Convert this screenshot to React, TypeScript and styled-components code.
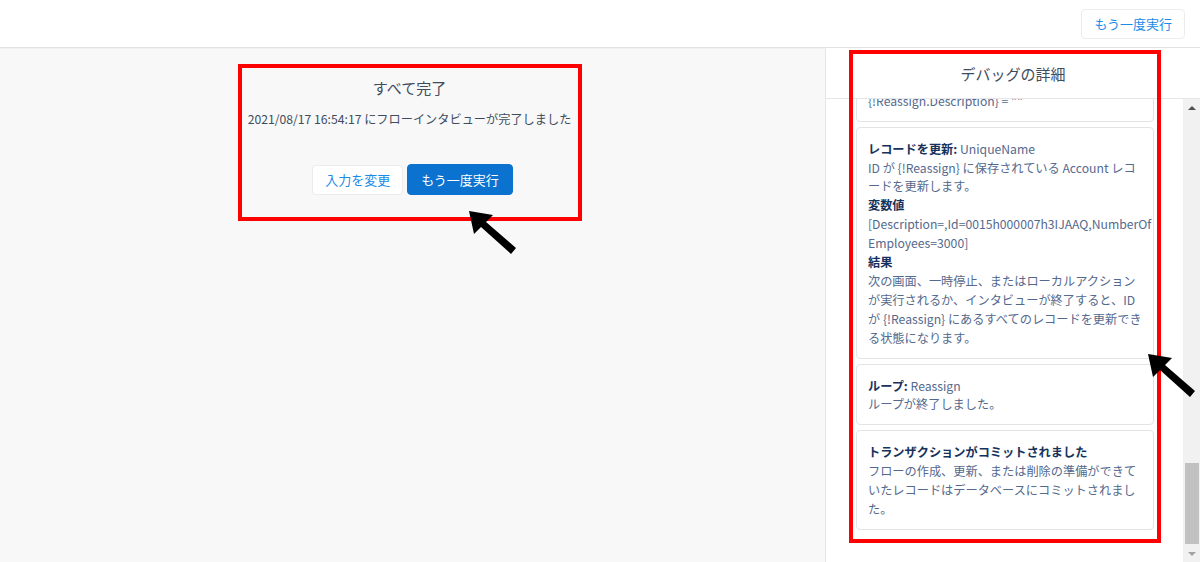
import React from "react";
import styled, { createGlobalStyle } from "styled-components";

const GlobalStyle = createGlobalStyle`
  html, body {
    margin: 0;
    padding: 0;
    height: 100%;
  }
  body {
    font-family: "Noto Sans CJK JP", "Noto Sans", sans-serif;
    color: #3e4c5e;
    overflow: hidden;
  }
  #root {
    height: 100%;
  }
`;

const Page = styled.div`
  position: relative;
  width: 1200px;
  height: 562px;
  display: flex;
  flex-direction: column;
  background: #f8f8f8;
`;

const TopBar = styled.div`
  height: 47px;
  flex: none;
  background: #fff;
  border-bottom: 1px solid #e2e2e2;
  box-shadow: 0 1px 1px rgba(0, 0, 0, 0.03);
  display: flex;
  align-items: center;
  justify-content: flex-end;
  padding: 0 15px;
`;

const Button = styled.button<{ $primary?: boolean }>`
  font-family: inherit;
  font-size: 13px;
  height: ${(p) => (p.$primary ? "31px" : "30px")};
  padding: 0 ${(p) => (p.$primary ? "13px" : "12px")};
  border-radius: 4px;
  border: 1px solid ${(p) => (p.$primary ? "#0b72cf" : "#ececec")};
  background: ${(p) => (p.$primary ? "#0b72cf" : "#fff")};
  color: ${(p) => (p.$primary ? "#fff" : "#1a8be6")};
  cursor: pointer;
`;

const Body = styled.div`
  flex: 1;
  display: flex;
  min-height: 0;
`;

const Main = styled.div`
  flex: 1;
  display: flex;
  justify-content: center;
  align-items: flex-start;
  padding-top: 16px;
  padding-right: 6px;
`;

const Frame = styled.div`
  width: 344px;
  box-sizing: border-box;
  border: 4px solid #ff0000;
  padding: 10px 0 22px;
  display: flex;
  flex-direction: column;
  align-items: center;
`;

const DoneTitle = styled.div`
  font-size: 15px;
  line-height: 20px;
`;

const DoneText = styled.div`
  margin-top: 12px;
  font-size: 12.2px;
  line-height: 18px;
  white-space: nowrap;
`;

const Actions = styled.div`
  margin-top: 36px;
  display: flex;
  align-items: center;
  gap: 4px;
  padding-left: 6px;
`;

const Panel = styled.aside`
  width: 374px;
  flex: none;
  background: #fff;
  border-left: 1px solid #e6e6e6;
  display: flex;
  flex-direction: column;
  min-height: 0;
`;

const PanelHeader = styled.div`
  height: 50px;
  flex: none;
  border-bottom: 1px solid #e6e6e6;
  display: flex;
  align-items: center;
  justify-content: center;
  font-size: 15px;
  color: #3e4c5e;
`;

const PanelBody = styled.div`
  flex: 1;
  display: flex;
  min-height: 0;
`;

const Viewport = styled.div`
  flex: 1;
  overflow: hidden;
  display: flex;
  flex-direction: column;
  justify-content: flex-end;
  gap: 5px;
  padding: 0 29px 32px 30px;
`;

const Card = styled.div`
  flex: none;
  border: 1px solid #e4e4e4;
  border-radius: 4px;
  padding: 12px 11px 10px;
  font-size: 12.2px;
  line-height: 18.9px;
  color: #54698d;
`;

const Line = styled.div`
  white-space: nowrap;
`;

const Strong = styled.span`
  font-weight: 700;
  color: #16325c;
`;

const ScrollTrack = styled.div`
  width: 17px;
  flex: none;
  background: #f1f1f1;
  display: flex;
  flex-direction: column;
  align-items: center;
`;

const ScrollArrow = styled.div<{ $down?: boolean }>`
  height: 17px;
  width: 17px;
  display: flex;
  align-items: center;
  justify-content: center;
  &::after {
    content: "";
    border-left: 4px solid transparent;
    border-right: 4px solid transparent;
    ${(p) =>
      p.$down ? "border-top: 4px solid #a3a3a3;" : "border-bottom: 4px solid #505050;"}
  }
`;

const ScrollSpace = styled.div`
  flex: 1;
`;

const ScrollThumb = styled.div`
  width: 14px;
  height: 81px;
  background: #c1c1c1;
  margin-bottom: 1px;
`;

const RedBox = styled.div`
  position: absolute;
  left: 849px;
  top: 50px;
  width: 312px;
  height: 493px;
  box-sizing: border-box;
  border: 4px solid #ff0000;
  pointer-events: none;
`;

const ArrowMark = styled.svg<{ $x: number; $y: number }>`
  position: absolute;
  left: ${(p) => p.$x}px;
  top: ${(p) => p.$y}px;
  width: 50px;
  height: 46px;
  pointer-events: none;
`;

const Arrow = ({ x, y }: { x: number; y: number }) => (
  <ArrowMark $x={x} $y={y} viewBox="0 0 50 46">
    <path d="M1 1 L25 5 L18 12 L48 38 L43 44 L13 17 L6 24 Z" fill="#000" />
  </ArrowMark>
);

type Segment = { b?: string; t?: string };

const cards: Segment[][][] = [
  [
    [{ b: "割り当て:" }, { t: " Reassign" }],
    [{ t: "{!Reassign.Name} = UniqueName" }],
    [{ t: '{!Reassign.Description} = ""' }],
  ],
  [
    [{ b: "レコードを更新:" }, { t: " UniqueName" }],
    [{ t: "ID が {!Reassign} に保存されている Account レコ" }],
    [{ t: "ードを更新します。" }],
    [{ b: "変数値" }],
    [{ t: "[Description=,Id=0015h000007h3IJAAQ,NumberOf" }],
    [{ t: "Employees=3000]" }],
    [{ b: "結果" }],
    [{ t: "次の画面、一時停止、またはローカルアクション" }],
    [{ t: "が実行されるか、インタビューが終了すると、ID" }],
    [{ t: "が {!Reassign} にあるすべてのレコードを更新でき" }],
    [{ t: "る状態になります。" }],
  ],
  [
    [{ b: "ループ:" }, { t: " Reassign" }],
    [{ t: "ループが終了しました。" }],
  ],
  [
    [{ b: "トランザクションがコミットされました" }],
    [{ t: "フローの作成、更新、または削除の準備ができて" }],
    [{ t: "いたレコードはデータベースにコミットされまし" }],
    [{ t: "た。" }],
  ],
];

export default function App() {
  return (
    <>
      <GlobalStyle />
      <Page>
        <TopBar>
          <Button>もう一度実行</Button>
        </TopBar>
        <Body>
          <Main>
            <Frame>
              <DoneTitle>すべて完了</DoneTitle>
              <DoneText>2021/08/17 16:54:17 にフローインタビューが完了しました</DoneText>
              <Actions>
                <Button>入力を変更</Button>
                <Button $primary>もう一度実行</Button>
              </Actions>
            </Frame>
          </Main>
          <Panel>
            <PanelHeader>デバッグの詳細</PanelHeader>
            <PanelBody>
              <Viewport>
                {cards.map((lines, i) => (
                  <Card key={i}>
                    {lines.map((segs, j) => (
                      <Line key={j}>
                        {segs.map((s, k) =>
                          s.b ? <Strong key={k}>{s.b}</Strong> : <span key={k}>{s.t}</span>
                        )}
                      </Line>
                    ))}
                  </Card>
                ))}
              </Viewport>
              <ScrollTrack>
                <ScrollArrow />
                <ScrollSpace />
                <ScrollThumb />
                <ScrollArrow $down />
              </ScrollTrack>
            </PanelBody>
          </Panel>
        </Body>
        <RedBox />
        <Arrow x={468} y={210} />
        <Arrow x={1147} y={353} />
      </Page>
    </>
  );
}
